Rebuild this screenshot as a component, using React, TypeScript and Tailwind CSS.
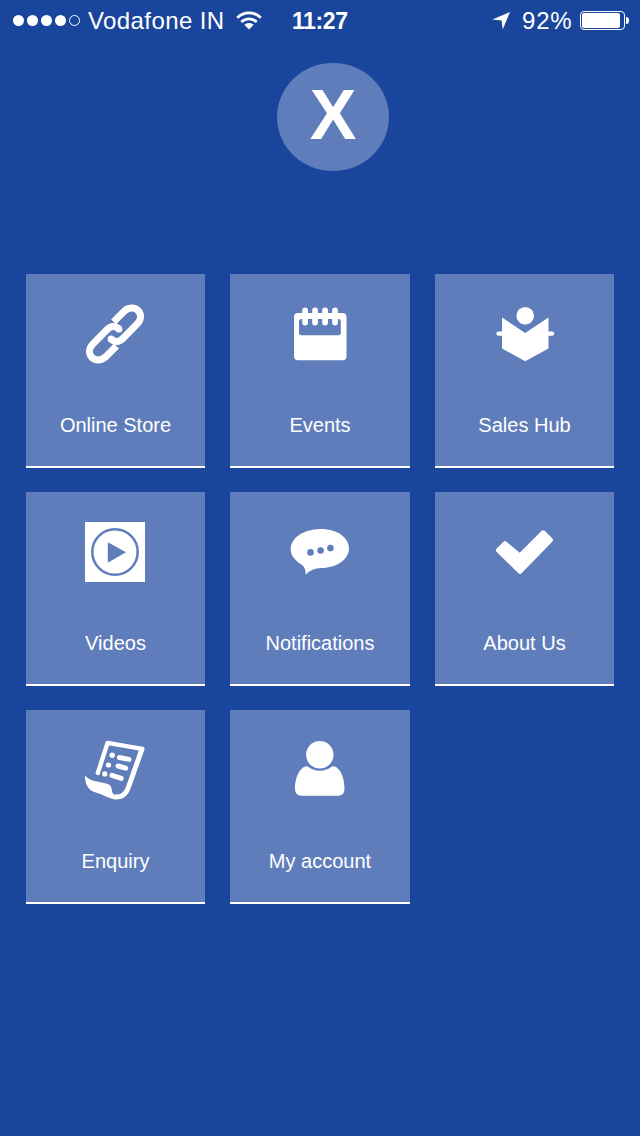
import type { ReactNode } from "react";

const LinkIcon = () => (
  <g fill="none" stroke="#fff" strokeWidth="7">
    <path d="M28.600 17.900 L38.700 7.700 C43.200 3.300 49.400 2.900 53 6.500 C56.600 10.100 56.300 15.600 52.200 19.900 L37.600 34.700 C34 38.200 29.300 38.300 26.200 35" />
    <path d="M31.400 42.100 L21.300 52.300 C16.800 56.700 10.600 57.100 7 53.500 C3.400 49.900 3.700 44.400 7.800 40.100 L22.400 25.300 C26 21.800 30.700 21.700 33.800 25" />
    <g fill="#fff" stroke="none">
      <circle cx="26.1" cy="34.9" r="3.5" />
      <circle cx="33.9" cy="25.1" r="3.5" />
    </g>
  </g>
);

const CalendarIcon = () => (
  <g>
    <path
      fill="#fff"
      fillRule="evenodd"
      d="M8 9H52.500a4 4 0 0 1 4 4V52.200a4 4 0 0 1-4 4H8a4 4 0 0 1-4-4V13a4 4 0 0 1 4-4zM11.500 15a2.500 2.500 0 0 0-2.500 2.500V28.800a2.500 2.500 0 0 0 2.500 2.500H48.300a2.500 2.500 0 0 0 2.500-2.500V17.500a2.500 2.500 0 0 0-2.500-2.500z"
    />
    <path
      stroke="#fff"
      strokeWidth="5.8"
      strokeLinecap="round"
      d="M15.100 6.500V18.500M25.100 6.500V18.500M35.100 6.500V18.500M45 6.500V18.500"
    />
  </g>
);

const ReaderIcon = () => (
  <g fill="#fff">
    <circle cx="30.200" cy="11.700" r="8.800" />
    <path d="M7 13.500 L30.200 29 L53.500 13.500 V44.600 L30.200 57.200 L7 44.600 Z" />
    <path stroke="#fff" strokeWidth="4.400" strokeLinecap="round" d="M3.500 29.600H9M51 29.600H57" />
  </g>
);

const VideoIcon = () => (
  <g>
    <rect width="60" height="60" fill="#fff" />
    <circle cx="30" cy="30" r="22.700" fill="none" stroke="#5f7dba" strokeWidth="2.500" />
    <path d="M22.800 20.300 L41 30.300 L22.800 40.800 Z" fill="#5f7dba" />
  </g>
);

const ChatIcon = () => (
  <g>
    <path
      fill="#fff"
      d="M29.800 7 C46 6.500 59 15 59 26.500 C59 37.500 46.500 45.800 31.500 46.100 C25 46.300 19.500 48.500 15.800 52.800 C15.600 47.500 14.500 44.600 11.300 42.400 C5 38.500 0.700 33.500 0.700 27.500 C0.700 16 13 7.600 29.800 7 Z"
    />
    <circle cx="20.500" cy="30.400" r="3.300" fill="#5f7dba" />
    <circle cx="30.600" cy="28.500" r="3.300" fill="#5f7dba" />
    <circle cx="40.400" cy="26.100" r="3.300" fill="#5f7dba" />
  </g>
);

const CheckIcon = () => (
  <path
    fill="#fff"
    stroke="#fff"
    strokeWidth="5"
    strokeLinejoin="round"
    d="M3.500 28.200 L10 21.700 L22.500 32.200 Q25 34.200 27.300 31.800 L48.200 10.800 L55.400 18 L25 49.300 Z"
  />
);

const ScrollIcon = () => (
  <g>
    <g fill="none" stroke="#fff" strokeLinejoin="round" strokeLinecap="round">
      <path strokeWidth="4.400" d="M12.800 33 L22.600 2.900 L57 8.900 L43.800 46.500" />
      <path strokeWidth="4.800" d="M57 9.100 L43.300 47.500 C41.200 54.300 36 57.800 31.200 56.600" />
      <path strokeWidth="5" d="M34.400 17.500 L44 19.400M33 26 L40.600 28.200M26.900 35.400 L36.200 38.400" />
    </g>
    <g fill="#fff">
      <circle cx="27.200" cy="15.300" r="2.700" />
      <circle cx="23.500" cy="25" r="2.600" />
      <circle cx="19.800" cy="33.900" r="2.600" />
      <path d="M0 35.400 C3 39 7 40.500 12 41.500 L21 43.400 C26 44.500 26.500 47 26.800 50 C27.300 54 30 56 33 56 L31.500 59.700 C27 59 22 57 16 54.200 L8 51.500 C2 48.500 0 42 0 35.400 Z" />
    </g>
  </g>
);

const PersonIcon = () => (
  <g fill="#fff">
    <circle cx="29.800" cy="14.800" r="13.700" />
    <path d="M17.500 26.300 C24 32.200 35.500 32.200 42.300 26.300 C49.500 25.800 54.500 37 54.500 48.500 C54.500 53.500 52 55.800 47.500 55.800 H12 C7.500 55.800 5 53.500 5 48.500 C5 37 10.500 25.800 17.500 26.300 Z" />
  </g>
);

const menu: { label: string; icon: ReactNode }[] = [
  { label: "Online Store", icon: <LinkIcon /> },
  { label: "Events", icon: <CalendarIcon /> },
  { label: "Sales Hub", icon: <ReaderIcon /> },
  { label: "Videos", icon: <VideoIcon /> },
  { label: "Notifications", icon: <ChatIcon /> },
  { label: "About Us", icon: <CheckIcon /> },
  { label: "Enquiry", icon: <ScrollIcon /> },
  { label: "My account", icon: <PersonIcon /> },
];

function StatusBar() {
  return (
    <header className="flex h-[41px] items-center whitespace-nowrap pl-[13px] text-2xl leading-none">
      <div className="flex w-[75px] shrink-0 gap-[3px]">
        {[1, 2, 3, 4].map((n) => (
          <span key={n} className="size-[11px] rounded-full bg-white" />
        ))}
        <span className="size-[11px] rounded-full border border-white" />
      </div>
      <span className="w-[148px] shrink-0 tracking-[0.4px]">Vodafone IN</span>
      <svg className="h-[19px] w-[26px] shrink-0" viewBox="0 0 26 19">
        <g fill="none" stroke="#fff" strokeWidth="2.800">
          <path d="M1.200 6.800 C8 0.100 18 0.100 24.800 6.800" />
          <path d="M5.300 11.100 C9.700 6.800 16.300 6.800 20.700 11.100" />
        </g>
        <path fill="#fff" d="M13 18.500 L8.300 13.800 C11 11.300 15 11.300 17.700 13.800 Z" />
      </svg>
      <span className="ml-[30px] w-[200px] shrink-0 pt-0.5 text-[23px] font-bold tracking-[-0.4px]">11:27</span>
      <svg className="h-[18px] w-[18px] shrink-0" viewBox="0 0 18 18">
        <path fill="#fff" d="M18 0 L10.700 17.500 L9.600 8.600 L0.300 7.500 Z" />
      </svg>
      <span className="ml-3 w-[58px] shrink-0 tracking-[0.8px]">92%</span>
      <div className="flex h-[19px] w-[45px] shrink-0 rounded-[4px] border border-white p-px">
        <span className="w-[38px] rounded-[2px] bg-white" />
      </div>
      <span className="ml-px h-[7px] w-[3px] rounded-r-full bg-white" />
    </header>
  );
}

export default function App() {
  return (
    <main className="h-[1136px] w-[640px] overflow-hidden bg-[#19469c] font-['Liberation_Sans',Arial,sans-serif] text-white">
      <StatusBar />
      <button className="ml-[277px] mt-[22px] flex h-[108px] w-28 items-center justify-center rounded-[50%] bg-[#5f7dba] text-[70px] font-bold leading-none">
        <span className="-mt-1">X</span>
      </button>
      <nav className="mx-[26px] mt-[103px] grid grid-cols-[179px_180px_179px] gap-x-[25px] gap-y-6">
        {menu.map((item) => (
          <a
            key={item.label}
            className="flex h-[194px] flex-col items-center border-b-2 border-white bg-[#5f7dba] pt-[30px] [&:nth-child(3n)>svg]:ml-px [&:nth-child(3n+1)>svg]:mr-px"
          >
            <svg className="size-[60px]" viewBox="0 0 60 60">
              {item.icon}
            </svg>
            <span className="mt-[49px] text-xl leading-6">{item.label}</span>
          </a>
        ))}
      </nav>
    </main>
  );
}
